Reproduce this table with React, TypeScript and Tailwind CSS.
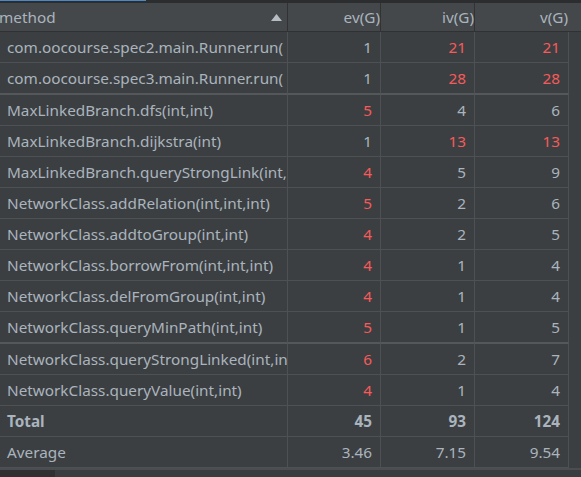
import React from 'react';

type Row = { name: string; ev: string; iv: string; v: string; evRed?: boolean; ivRed?: boolean; vRed?: boolean; thick?: boolean };

const rows: Row[] = [
  { name: 'com.oocourse.spec2.main.Runner.run(', ev: '1', iv: '21', v: '21', ivRed: true, vRed: true },
  { name: 'com.oocourse.spec3.main.Runner.run(', ev: '1', iv: '28', v: '28', ivRed: true, vRed: true, thick: true },
  { name: 'MaxLinkedBranch.dfs(int,int)', ev: '5', iv: '4', v: '6', evRed: true },
  { name: 'MaxLinkedBranch.dijkstra(int)', ev: '1', iv: '13', v: '13', ivRed: true, vRed: true },
  { name: 'MaxLinkedBranch.queryStrongLink(int,', ev: '4', iv: '5', v: '9', evRed: true },
  { name: 'NetworkClass.addRelation(int,int,int)', ev: '5', iv: '2', v: '6', evRed: true },
  { name: 'NetworkClass.addtoGroup(int,int)', ev: '4', iv: '2', v: '5', evRed: true },
  { name: 'NetworkClass.borrowFrom(int,int,int)', ev: '4', iv: '1', v: '4', evRed: true },
  { name: 'NetworkClass.delFromGroup(int,int)', ev: '4', iv: '1', v: '4', evRed: true },
  { name: 'NetworkClass.queryMinPath(int,int)', ev: '5', iv: '1', v: '5', evRed: true, thick: true },
  { name: 'NetworkClass.queryStrongLinked(int,int', ev: '6', iv: '2', v: '7', evRed: true },
  { name: 'NetworkClass.queryValue(int,int)', ev: '4', iv: '1', v: '4', evRed: true },
];

const txt = 'text-[#aab4be]';
const red = 'text-[#f75a5a]';

function Num({ value, isRed, w, bold, line }: { value: string; isRed?: boolean; w: string; bold?: boolean; line: string }) {
  return (
    <div className={`${w} shrink-0 border-r border-[#4e5154] ${line} flex items-center justify-end pr-[8px] ${isRed ? red : txt} ${bold ? 'font-bold' : ''}`}>
      {value}
    </div>
  );
}

function TableRow({ r, bold }: { r: Row; bold?: boolean }) {
  const line = r.thick ? 'border-b-2 border-b-[#55585b]' : 'border-b border-b-[#4e5154]';
  return (
    <div className={`flex shrink-0 ${r.thick ? 'h-[32px]' : 'h-[31px]'}`}>
      <div className={`w-[288px] shrink-0 border-r border-[#4e5154] ${line} flex items-center pl-[7px] overflow-hidden whitespace-nowrap ${txt} ${bold ? 'font-bold' : ''}`}>
        {r.name}
      </div>
      <Num w="w-[93px]" line={line} value={r.ev} isRed={r.evRed} bold={bold} />
      <Num w="w-[94px]" line={line} value={r.iv} isRed={r.ivRed} bold={bold} />
      <Num w="w-[94px]" line={line} value={r.v} isRed={r.vRed} bold={bold} />
      <div className="flex-1" />
    </div>
  );
}

export default function App() {
  return (
    <div className="w-[581px] h-[477px] overflow-hidden bg-[#3c3f41] text-[15.3px] flex flex-col" style={{ fontFamily: '"Noto Sans", "Open Sans", sans-serif' }}>
      <div className="h-[3px] bg-[#2b2d2f] shrink-0">
        <div className="w-[146px] h-[1px] bg-[#4a88c7]" />
      </div>
      <div className={`flex h-[29px] shrink-0 bg-[#45484a] border-b border-[#2f3133] ${txt}`}>
        <div className="w-[288px] shrink-0 border-r border-[#303234] flex items-center justify-between pr-[5px]">
          <span className="-ml-[1px]">method</span>
          <svg width="11" height="7" viewBox="0 0 11 7"><path d="M0 7 L5.5 0 L11 7 Z" fill="#b5bcc3" /></svg>
        </div>
        <div className="w-[93px] shrink-0 border-r border-[#303234] flex items-center justify-end">ev(G)</div>
        <div className="w-[94px] shrink-0 border-r border-[#303234] flex items-center justify-end">iv(G)</div>
        <div className="w-[94px] shrink-0 flex items-center justify-end pr-[1px]">v(G)</div>
        <div className="flex-1" />
      </div>
      {rows.map((r) => (
        <TableRow key={r.name} r={r} />
      ))}
      <TableRow r={{ name: 'Total', ev: '45', iv: '93', v: '124' }} bold />
      <TableRow r={{ name: 'Average', ev: '3.46', iv: '7.15', v: '9.54' }} />
      <div className="h-[2px] bg-[#4b4e50] shrink-0" />
      <div className="flex flex-1">
        <div className="w-[55px] bg-[#2e3032]" />
        <div className="flex-1 bg-[#3a3d3f]" />
      </div>
    </div>
  );
}
